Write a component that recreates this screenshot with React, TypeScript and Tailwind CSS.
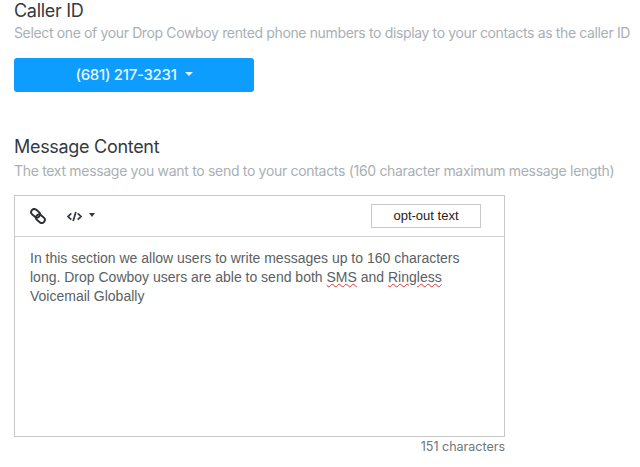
export default function App() {
  return (
    <div className="h-[467px] w-[640px] overflow-hidden bg-white pl-[14px] pt-[1px] font-['Inter',sans-serif]">
      <h2 className="h-[20px] text-[18px] leading-[20px] tracking-[-0.3px] text-[#343a40] whitespace-nowrap">Caller ID</h2>
      <p className="mt-[2px] h-[20px] whitespace-nowrap text-[14px] leading-[20px] tracking-[-0.36px] text-[#a9afb5]">
        Select one of your Drop Cowboy rented phone numbers to display to your contacts as the caller ID
      </p>
      <button className="mt-[15px] flex h-[34px] w-[240px] items-center justify-center gap-[8px] rounded-[3px] bg-[#0d9dff] text-[15px] font-medium tracking-[-0.3px] text-[#e6f5ff]">
        (681) 217-3231
        <span className="mt-[-2px] h-0 w-0 border-x-[4px] border-t-[4px] border-x-transparent border-t-[#e6f5ff]" />
      </button>
      <h2 className="mt-[45px] h-[20px] whitespace-nowrap text-[18px] leading-[20px] tracking-[-0.3px] text-[#343a40]">Message Content</h2>
      <p className="mt-[4px] h-[20px] whitespace-nowrap text-[14px] leading-[20px] tracking-[-0.31px] text-[#a9afb5]">
        The text message you want to send to your contacts (160 character maximum message length)
      </p>
      <div className="mt-[14px] flex h-[242px] w-[491px] flex-col border border-[#c8c8c8]">
        <div className="flex h-[41px] items-center border-b border-[#d0d0d0] pl-[15px] pr-[23px]">
          <svg viewBox="0 0 16 16" className="h-[16px] w-[16px] text-[#2b2f33]" fill="none" stroke="currentColor" strokeWidth="1.9">
            <rect x="0.8" y="2.2" width="9.6" height="6.2" rx="3.1" transform="rotate(40 5.6 5.3)" />
            <rect x="5.6" y="7.6" width="9.6" height="6.2" rx="3.1" transform="rotate(40 10.4 10.7)" />
          </svg>
          <svg viewBox="0 0 16 12" className="ml-[21px] h-[11px] w-[15px] text-[#343a40]" fill="none" stroke="currentColor" strokeWidth="1.9">
            <path d="M4.5 2.5 1 6l3.5 3.5M11.5 2.5 15 6l-3.5 3.5M9.5 1 6.5 11" />
          </svg>
          <span className="ml-[7px] mt-[-2px] h-0 w-0 border-x-[3.5px] border-t-[4px] border-x-transparent border-t-[#343a40]" />
          <button className="ml-auto flex h-[24px] w-[110px] items-center justify-center border border-[#c8c8c8] font-['Liberation_Sans',sans-serif] text-[13px] text-[#222]">
            opt-out text
          </button>
        </div>
        <div className="px-[15px] pt-[12px] font-['Liberation_Sans',sans-serif] text-[14px] leading-[19px] text-[#5a5f64]">
          In this section we allow users to write messages up to 160 characters long. Drop Cowboy users are able to send both{" "}
          <span className="underline decoration-wavy decoration-[#d33] decoration-1 underline-offset-[1px]">SMS</span> and{" "}
          <span className="underline decoration-wavy decoration-[#d33] decoration-1 underline-offset-[1px]">Ringless</span> Voicemail Globally
        </div>
      </div>
      <div className="w-[491px] pt-[2px] text-right text-[12.5px] leading-[16px] text-[#6c757d]">151 characters</div>
    </div>
  );
}
